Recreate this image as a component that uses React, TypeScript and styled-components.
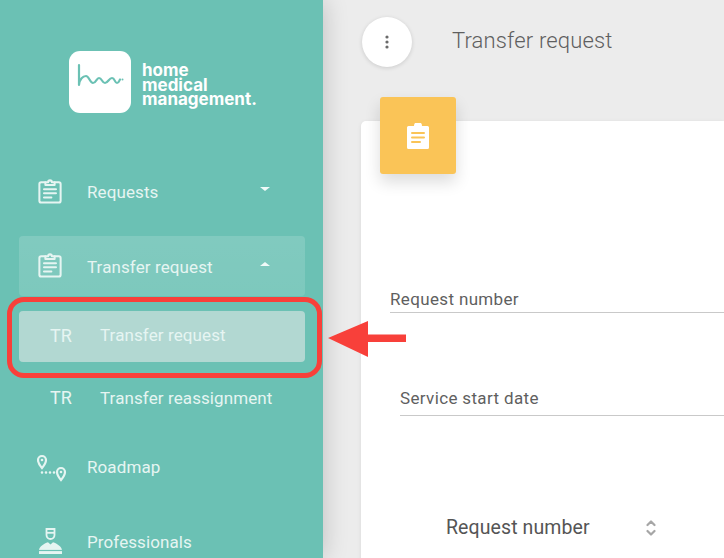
import React from "react";
import styled, { createGlobalStyle } from "styled-components";

const Global = createGlobalStyle`
  html, body { margin: 0; padding: 0; height: 100%; overflow: hidden; }
  #root { height: 100%; }
  * { box-sizing: border-box; }
`;

const Page = styled.div`
  position: relative;
  display: flex;
  width: 724px;
  height: 558px;
  overflow: hidden;
  background: #ececec;
  font-family: Roboto, "Liberation Sans", sans-serif;
`;

const Sidebar = styled.aside`
  flex: 0 0 323px;
  height: 558px;
  padding-top: 51px;
  overflow: hidden;
  background: #6bc1b4;
  box-shadow: 0 0 24px rgba(0, 0, 0, 0.2);
  z-index: 2;
`;

const Brand = styled.div`
  display: flex;
  align-items: center;
  gap: 11px;
  height: 62px;
  margin: 0 0 49px 69px;
`;

const BrandMark = styled.div`
  display: flex;
  width: 62px;
  height: 62px;
  border-radius: 11px;
  background: #fff;
`;

const BrandName = styled.div`
  margin-top: 6px;
  font-family: Inter, "Liberation Sans", sans-serif;
  font-size: 17px;
  font-weight: 700;
  line-height: 14.5px;
  color: #fff;
`;

const Nav = styled.nav`
  display: flex;
  flex-direction: column;
  width: 286px;
  margin-left: 19px;
`;

const Row = styled.div<{ $open?: boolean; $tail?: number; $drop?: number }>`
  display: flex;
  flex: 0 0 60px;
  align-items: center;
  height: 60px;
  margin-bottom: ${(p) => p.$tail ?? 14}px;
  padding: ${(p) => p.$drop ?? 0}px 0 0 18px;
  border-radius: 4px;
  background: ${(p) =>
    p.$open ? "linear-gradient(rgba(255,255,255,0.15), rgba(255,255,255,0.12))" : "transparent"};
`;

const RowIcon = styled.span<{ $lift?: number }>`
  display: flex;
  flex: 0 0 50px;
  align-items: center;
  margin-top: ${(p) => -(p.$lift ?? 0)}px;
`;

const RowLabel = styled.span`
  flex: 1;
  font-size: 17px;
  line-height: 20px;
  letter-spacing: 0.1px;
  color: #e6f5f2;
`;

const Caret = styled.span<{ $up?: boolean }>`
  width: 0;
  height: 0;
  margin: -7px 35px 0 0;
  border-left: 5px solid transparent;
  border-right: 5px solid transparent;
  ${(p) => (p.$up ? "border-bottom: 4px solid #f1faf8;" : "border-top: 4px solid #f1faf8;")}
`;

const SubList = styled.div`
  display: flex;
  flex-direction: column;
  gap: 11px;
  margin-bottom: 13px;
`;

const SubRow = styled.div<{ $active?: boolean }>`
  display: flex;
  align-items: center;
  height: 51px;
  padding: 0 0 ${(p) => (p.$active ? 3 : 2)}px 31px;
  border-radius: 4px;
  background: ${(p) => (p.$active ? "#b2d8d2" : "transparent")};
`;

const SubAbbr = styled.span`
  flex: 0 0 50px;
  font-size: 18px;
  color: #e6f5f2;
`;

const SubLabel = styled.span`
  font-size: 17px;
  letter-spacing: 0.1px;
  color: #e6f5f2;
`;

const Main = styled.main`
  flex: 1;
  min-width: 0;
  padding: 17px 0 0 38px;
`;

const TopBar = styled.header`
  display: flex;
  align-items: center;
  gap: 40px;
  height: 50px;
  margin-left: 1px;
`;

const MenuButton = styled.button`
  display: flex;
  align-items: center;
  justify-content: center;
  width: 50px;
  height: 50px;
  padding: 0;
  border: 0;
  border-radius: 50%;
  background: #fff;
  box-shadow: 0 1px 4px rgba(0, 0, 0, 0.14);
`;

const PageTitle = styled.h1`
  margin: -4px 0 0;
  font-size: 22px;
  font-weight: 300;
  letter-spacing: 0.15px;
  color: #5f5f5f;
`;

const Card = styled.section`
  position: relative;
  height: 460px;
  margin-top: 54px;
  padding: 167px 0 0 29px;
  border-radius: 5px 0 0 5px;
  background: #fff;
  box-shadow: 0 1px 4px rgba(0, 0, 0, 0.08);
`;

const Badge = styled.div`
  position: absolute;
  top: -24px;
  left: 19px;
  display: flex;
  align-items: center;
  justify-content: center;
  width: 76px;
  height: 77px;
  border-radius: 3px;
  background: #fac457;
  box-shadow: 0 8px 16px rgba(0, 0, 0, 0.14);
`;

const Field = styled.div<{ $indent?: number; $height: number; $tail: number; $top: number }>`
  display: flex;
  align-items: flex-start;
  height: ${(p) => p.$height}px;
  margin: 0 0 ${(p) => p.$tail}px ${(p) => p.$indent ?? 0}px;
  padding-top: ${(p) => p.$top}px;
  border-bottom: 1px solid #c9c9c9;
  font-size: 17px;
  line-height: 20px;
  letter-spacing: 0.35px;
  color: #5f5f5f;
`;

const SortHeader = styled.div`
  display: flex;
  align-items: center;
  gap: 56px;
  margin-left: 56px;
  font-size: 19.5px;
  letter-spacing: 0.1px;
  color: #555;
`;

const Callout = styled.div`
  position: absolute;
  top: 297px;
  left: 7px;
  width: 315px;
  height: 81px;
  border: 5px solid #f8403a;
  border-radius: 17px;
  z-index: 3;
`;

const CalloutArrow = styled.svg`
  position: absolute;
  top: 320px;
  left: 327px;
  z-index: 3;
`;

const ClipboardSvg = styled.svg`
  margin-left: 1px;
`;

const ClipboardIcon = () => (
  <ClipboardSvg width="24" height="26" viewBox="0 0 26 28" fill="none" stroke="#e6f5f2" strokeWidth="2.2" strokeLinecap="round" strokeLinejoin="round">
    <path d="M8 4.5H3.5a2 2 0 0 0-2 2v18a2 2 0 0 0 2 2h19a2 2 0 0 0 2-2v-18a2 2 0 0 0-2-2H18" />
    <path d="M8 7.5V4.5h3a2 2 0 0 1 4 0h3v3z" />
    <path d="M6.5 12h13M6.5 16.5h13M6.5 21h8" />
  </ClipboardSvg>
);

const RoadmapIcon = () => (
  <svg width="30" height="30" viewBox="0 0 30 30" fill="none">
    <path d="M5 4a4 4 0 0 0-4 4C1 11.200 5 16 5 16s4-4.800 4-8a4 4 0 0 0-4-4z" stroke="#e6f5f2" strokeWidth="2.200" />
    <circle cx="5" cy="8" r="1.300" fill="#e6f5f2" />
    <path d="M24 16a4 4 0 0 0-4 4c0 3.200 4 8 4 8s4-4.800 4-8a4 4 0 0 0-4-4z" stroke="#e6f5f2" strokeWidth="2.200" />
    <circle cx="24" cy="20" r="1.300" fill="#e6f5f2" />
    <path d="M5 20.500v.01M9 20.500v.01M13 20.500v.01M17 20.500v.01" stroke="#e6f5f2" strokeWidth="2.600" strokeLinecap="round" />
  </svg>
);

const ProfessionalIcon = () => (
  <svg width="26" height="28" viewBox="0 0 26 28" fill="none">
    <path d="M9.500 3h8v6a4 4 0 0 1-8 0z" stroke="#e6f5f2" strokeWidth="1.800" />
    <path d="M9.500 6.800h8" stroke="#e6f5f2" strokeWidth="1.800" />
    <path d="M2 28v-3.500c0-4 5-7 9-8.300l2.500 2.300 2.500-2.300c4 1.300 9 4.300 9 8.300V28z" fill="#e6f5f2" />
    <path d="M2 24.500h23" stroke="#6bc1b4" strokeWidth="1.200" />
  </svg>
);

const DotsIcon = () => (
  <svg width="4" height="14" viewBox="0 0 4 14" fill="#6a6a6a">
    <circle cx="2" cy="2" r="1.600" />
    <circle cx="2" cy="7" r="1.600" />
    <circle cx="2" cy="12" r="1.600" />
  </svg>
);

const BadgeClipboard = () => (
  <svg width="24" height="26" viewBox="0 0 24 26">
    <path d="M2.500 3H8a4 4 0 0 1 8 0h5.500A1.500 1.500 0 0 1 23 4.500v20a1.500 1.500 0 0 1-1.500 1.500h-19A1.500 1.500 0 0 1 1 24.500v-20A1.500 1.500 0 0 1 2.500 3z" fill="#fff" />
    <path d="M6 10h12M6 14.500h12M6 19h8" stroke="#fac457" strokeWidth="2" strokeLinecap="round" />
  </svg>
);

const SortIcon = () => (
  <svg width="10" height="16" viewBox="0 0 10 16" fill="none" stroke="#a6a6a6" strokeWidth="2.200" strokeLinecap="round" strokeLinejoin="round">
    <path d="M1.500 5L5 1.500 8.500 5M1.500 11L5 14.500 8.500 11" />
  </svg>
);

const LogoWave = () => (
  <svg width="62" height="62" viewBox="0 0 62 62" fill="none" stroke="#6bc1b4" strokeWidth="2.200" strokeLinecap="round" strokeLinejoin="round">
    <path d="M10 14V34C10.500 28 14 25 17 25C20 25 21 32 24 32C27 32 27.500 27 30 27C33 27 33 32 36 32C39 32 40 27 43 27C46 27 45.500 32 48 32C50 32 50.500 29 51 28.500" />
    <circle cx="53.500" cy="28.500" r="1" fill="#6bc1b4" stroke="none" />
  </svg>
);

export default function App() {
  return (
    <Page>
      <Global />
      <Sidebar>
        <Brand>
          <BrandMark>
            <LogoWave />
          </BrandMark>
          <BrandName>
            home
            <br />
            medical
            <br />
            management.
          </BrandName>
        </Brand>
        <Nav>
          <Row>
            <RowIcon $lift={3}><ClipboardIcon /></RowIcon>
            <RowLabel>Requests</RowLabel>
            <Caret />
          </Row>
          <Row $open $tail={15} $drop={2}>
            <RowIcon $lift={5}><ClipboardIcon /></RowIcon>
            <RowLabel>Transfer request</RowLabel>
            <Caret $up />
          </Row>
          <SubList>
            <SubRow $active>
              <SubAbbr>TR</SubAbbr>
              <SubLabel>Transfer request</SubLabel>
            </SubRow>
            <SubRow>
              <SubAbbr>TR</SubAbbr>
              <SubLabel>Transfer reassignment</SubLabel>
            </SubRow>
          </SubList>
          <Row>
            <RowIcon><RoadmapIcon /></RowIcon>
            <RowLabel>Roadmap</RowLabel>
          </Row>
          <Row $drop={2}>
            <RowIcon $lift={4}><ProfessionalIcon /></RowIcon>
            <RowLabel>Professionals</RowLabel>
          </Row>
        </Nav>
      </Sidebar>
      <Main>
        <TopBar>
          <MenuButton aria-label="Menu"><DotsIcon /></MenuButton>
          <PageTitle>Transfer request</PageTitle>
        </TopBar>
        <Card>
          <Badge><BadgeClipboard /></Badge>
          <Field $height={25} $tail={72} $top={1}>Request number</Field>
          <Field $indent={10} $height={31} $tail={100} $top={3}>Service start date</Field>
          <SortHeader>
            Request number
            <SortIcon />
          </SortHeader>
        </Card>
      </Main>
      <Callout />
      <CalloutArrow width="80" height="38" viewBox="0 0 80 38">
        <path d="M1 18L41 1V14.500H79V22H41V37z" fill="#f8403a" />
      </CalloutArrow>
    </Page>
  );
}
